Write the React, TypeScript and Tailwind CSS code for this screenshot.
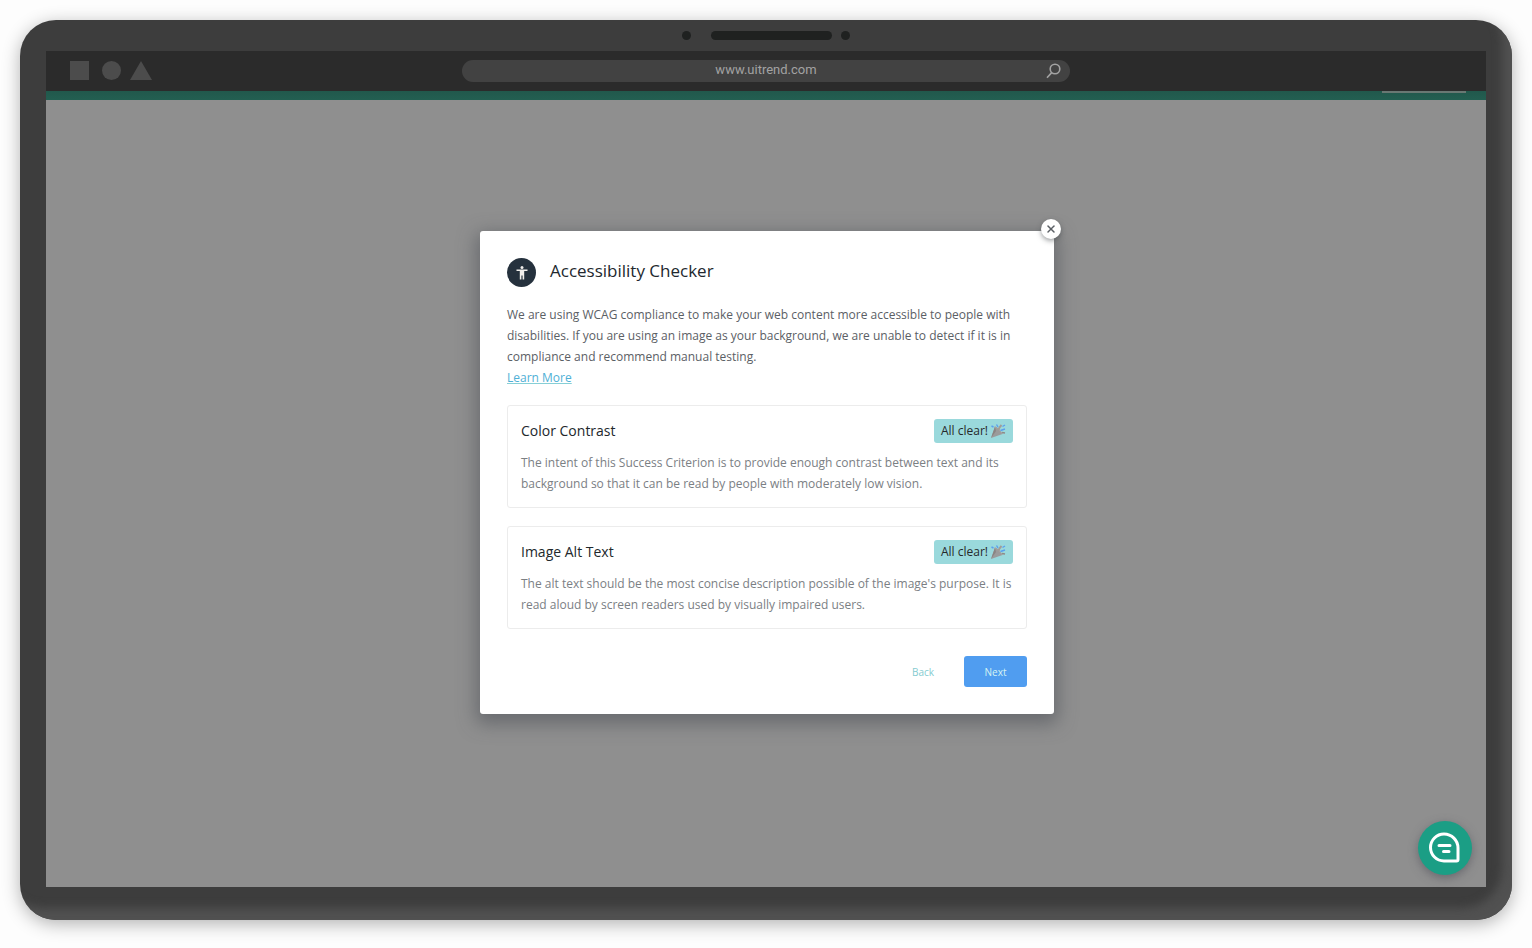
import { X } from "lucide-react";

interface CheckCardProps {
  title: string;
  description: string;
}

function PartyPopper() {
  return (
    <svg viewBox="0 0 16 16" className="w-4 h-4" aria-hidden="true">
      <path d="M1 15 5 3.500C7.500 4 11.500 8 12.500 11Z" fill="#9b9b9b" />
      <path d="M1 15 5 3.500 6 8Z" fill="#8a8583" />
      <path d="M4.500 4.200c3 .8 6.500 4.300 7.500 6.800" stroke="#a8a3a1" strokeWidth="1" fill="none" />
      <path d="M8.500 7c0-2 1-3 3-5" stroke="#a39c98" strokeWidth="2" fill="none" />
      <path d="M1.500 3 3.500 4M6.500 1.500l1.500 2.500M10.500 7.500l4.500-1.500M12.500 3.500l2.500-1.500" stroke="#5a9fee" strokeWidth="1.400" fill="none" />
      <path d="M12 9.500l3 .5" stroke="#8f8a88" strokeWidth="1.400" />
    </svg>
  );
}

function CheckCard({ title, description }: CheckCardProps) {
  return (
    <section className="border border-[#ececec] rounded-[3px] p-[13px]">
      <div className="flex items-center justify-between h-6 mb-[9px]">
        <h2 className="text-sm font-medium text-[#22282c]">{title}</h2>
        <span className="flex items-center gap-0.5 h-6 px-[7px] rounded-[3px] bg-[#9ad9dc] text-xs text-[#26282a]">
          All clear!
          <PartyPopper />
        </span>
      </div>
      <p className="text-xs leading-[21px] text-[#7b8084]">{description}</p>
    </section>
  );
}

function BrowserBar() {
  return (
    <div className="flex items-center h-10 px-6 bg-[#2b2b2b]">
      <div className="flex-1">
        <svg viewBox="0 0 84 20" className="w-[84px] h-5" fill="#4c4c4c" aria-hidden="true">
          <rect x="0" y="0" width="19" height="19" />
          <circle cx="41.500" cy="9.500" r="9.500" />
          <path d="M71 0 82 19H60Z" />
        </svg>
      </div>
      <div className="relative w-[608px]">
        <input
          aria-label="Address"
          defaultValue="www.uitrend.com"
          className="block w-full h-[22px] pb-[3px] rounded-full bg-[#424242] text-center text-[13px] text-[#a3a3a3] font-[Roboto,sans-serif] outline-none"
        />
        <button aria-label="Search" className="absolute right-2 top-[3px]">
          <svg viewBox="0 0 16 16" className="w-4 h-4" fill="none" stroke="#a3a3a3" strokeWidth="1.600">
            <circle cx="9" cy="6" r="4.800" />
            <path d="M5.700 9.600 1 14.800" />
          </svg>
        </button>
      </div>
      <div className="flex-1" />
    </div>
  );
}

function AccessibilityDialog() {
  return (
    <div
      role="dialog"
      aria-labelledby="dialog-title"
      className="relative w-full max-w-[574px] p-[27px] bg-white rounded-[3px] shadow-[0_6px_18px_4px_rgba(80,84,90,0.6)]"
    >
      <button
        aria-label="Close"
        className="absolute -top-3 -right-[7px] flex items-center justify-center w-5 h-5 rounded-full bg-white text-[#5a5f64] shadow-[0_2px_5px_rgba(60,65,70,0.5)]"
      >
        <X className="w-3 h-3" strokeWidth={3} />
      </button>

      <header className="flex items-center gap-3.5 h-[29px] mb-[17px]">
        <span className="flex items-center justify-center w-[29px] h-[29px] rounded-full bg-[#25313d]">
          <svg viewBox="0 0 12 14" className="w-3 h-3.5" fill="#f1efec" aria-hidden="true">
            <circle cx="6" cy="1.500" r="1.500" />
            <path d="M.5 3.500h11v1.400H8.200V13.500H6.600V9.500H5.400v4H3.800V4.900H.5Z" />
          </svg>
        </span>
        <h1 id="dialog-title" className="text-[17px] leading-6 font-medium text-[#22282e] pb-1">
          Accessibility Checker
        </h1>
      </header>

      <div className="text-xs leading-[21px] text-[#5b6065] mb-[17px]">
        <p>
          We are using WCAG compliance to make your web content more accessible to people with
          disabilities. If you are using an image as your background, we are unable to detect if it is in
          compliance and recommend manual testing.
        </p>
        <a href="#learn-more" className="block w-fit text-[#4fb0d6] underline decoration-[#86cfd6]">
          Learn More
        </a>
      </div>

      <div className="flex flex-col gap-[18px]">
        <CheckCard
          title="Color Contrast"
          description="The intent of this Success Criterion is to provide enough contrast between text and its background so that it can be read by people with moderately low vision."
        />
        <CheckCard
          title="Image Alt Text"
          description="The alt text should be the most concise description possible of the image's purpose. It is read aloud by screen readers used by visually impaired users."
        />
      </div>

      <footer className="flex justify-end gap-2.5 mt-[27px] text-[10px]">
        <button className="h-[31px] px-5 pt-0.5 text-[#84cbd0]">Back</button>
        <button className="h-[31px] w-[63px] pt-0.5 rounded-[3px] bg-[#509df0] text-[#d5f3f2]">Next</button>
      </footer>
    </div>
  );
}

function ChatButton() {
  return (
    <button
      aria-label="Open chat"
      className="absolute right-3.5 bottom-3 flex items-center justify-center w-[54px] h-[54px] rounded-full bg-[#1b9e85] shadow-[0_3px_10px_rgba(80,80,90,0.6)]"
    >
      <svg viewBox="0 0 32 32" className="w-8 h-8" fill="none" stroke="#fff" strokeWidth="3" aria-hidden="true">
        <path d="M15 2a13.500 13.500 0 0 0 0 27H27.500a1.500 1.500 0 0 0 1.500-1.500V16A14 14 0 0 0 15 2Z" />
        <path d="M10 13.500h11M14.500 19.500h5.500" strokeLinecap="round" />
      </svg>
    </button>
  );
}

export default function App() {
  return (
    <div className="flex min-h-screen p-5 pb-7 bg-[#fdfdfd] font-['Open_Sans',sans-serif]">
      <div className="flex flex-col flex-1 px-[26px] pb-[33px] rounded-[36px] bg-[#3d3d3d] shadow-[inset_-14px_-16px_10px_-4px_#515151,0_4px_18px_rgba(0,0,0,0.3)]">
        <div className="flex items-center justify-center h-[31px] pb-px">
          <svg viewBox="0 0 170 10" className="w-[170px] h-2.5" fill="#1f2120" aria-hidden="true">
            <circle cx="5.500" cy="5.500" r="4.500" />
            <rect x="30" y="1" width="121" height="9" rx="4.500" />
            <circle cx="164.500" cy="5.500" r="4.500" />
          </svg>
        </div>
        <div className="relative flex flex-col flex-1">
          <BrowserBar />
          <div className="flex justify-end h-[9px] px-5 bg-[linear-gradient(#21584c,#235f51)]">
            <div className="w-[84px] h-0.5 bg-[#697873]" />
          </div>
          <main className="flex flex-1 items-start justify-center pt-[131px] pl-0.5 bg-[#8f8f8f]">
            <AccessibilityDialog />
          </main>
          <ChatButton />
        </div>
      </div>
    </div>
  );
}
